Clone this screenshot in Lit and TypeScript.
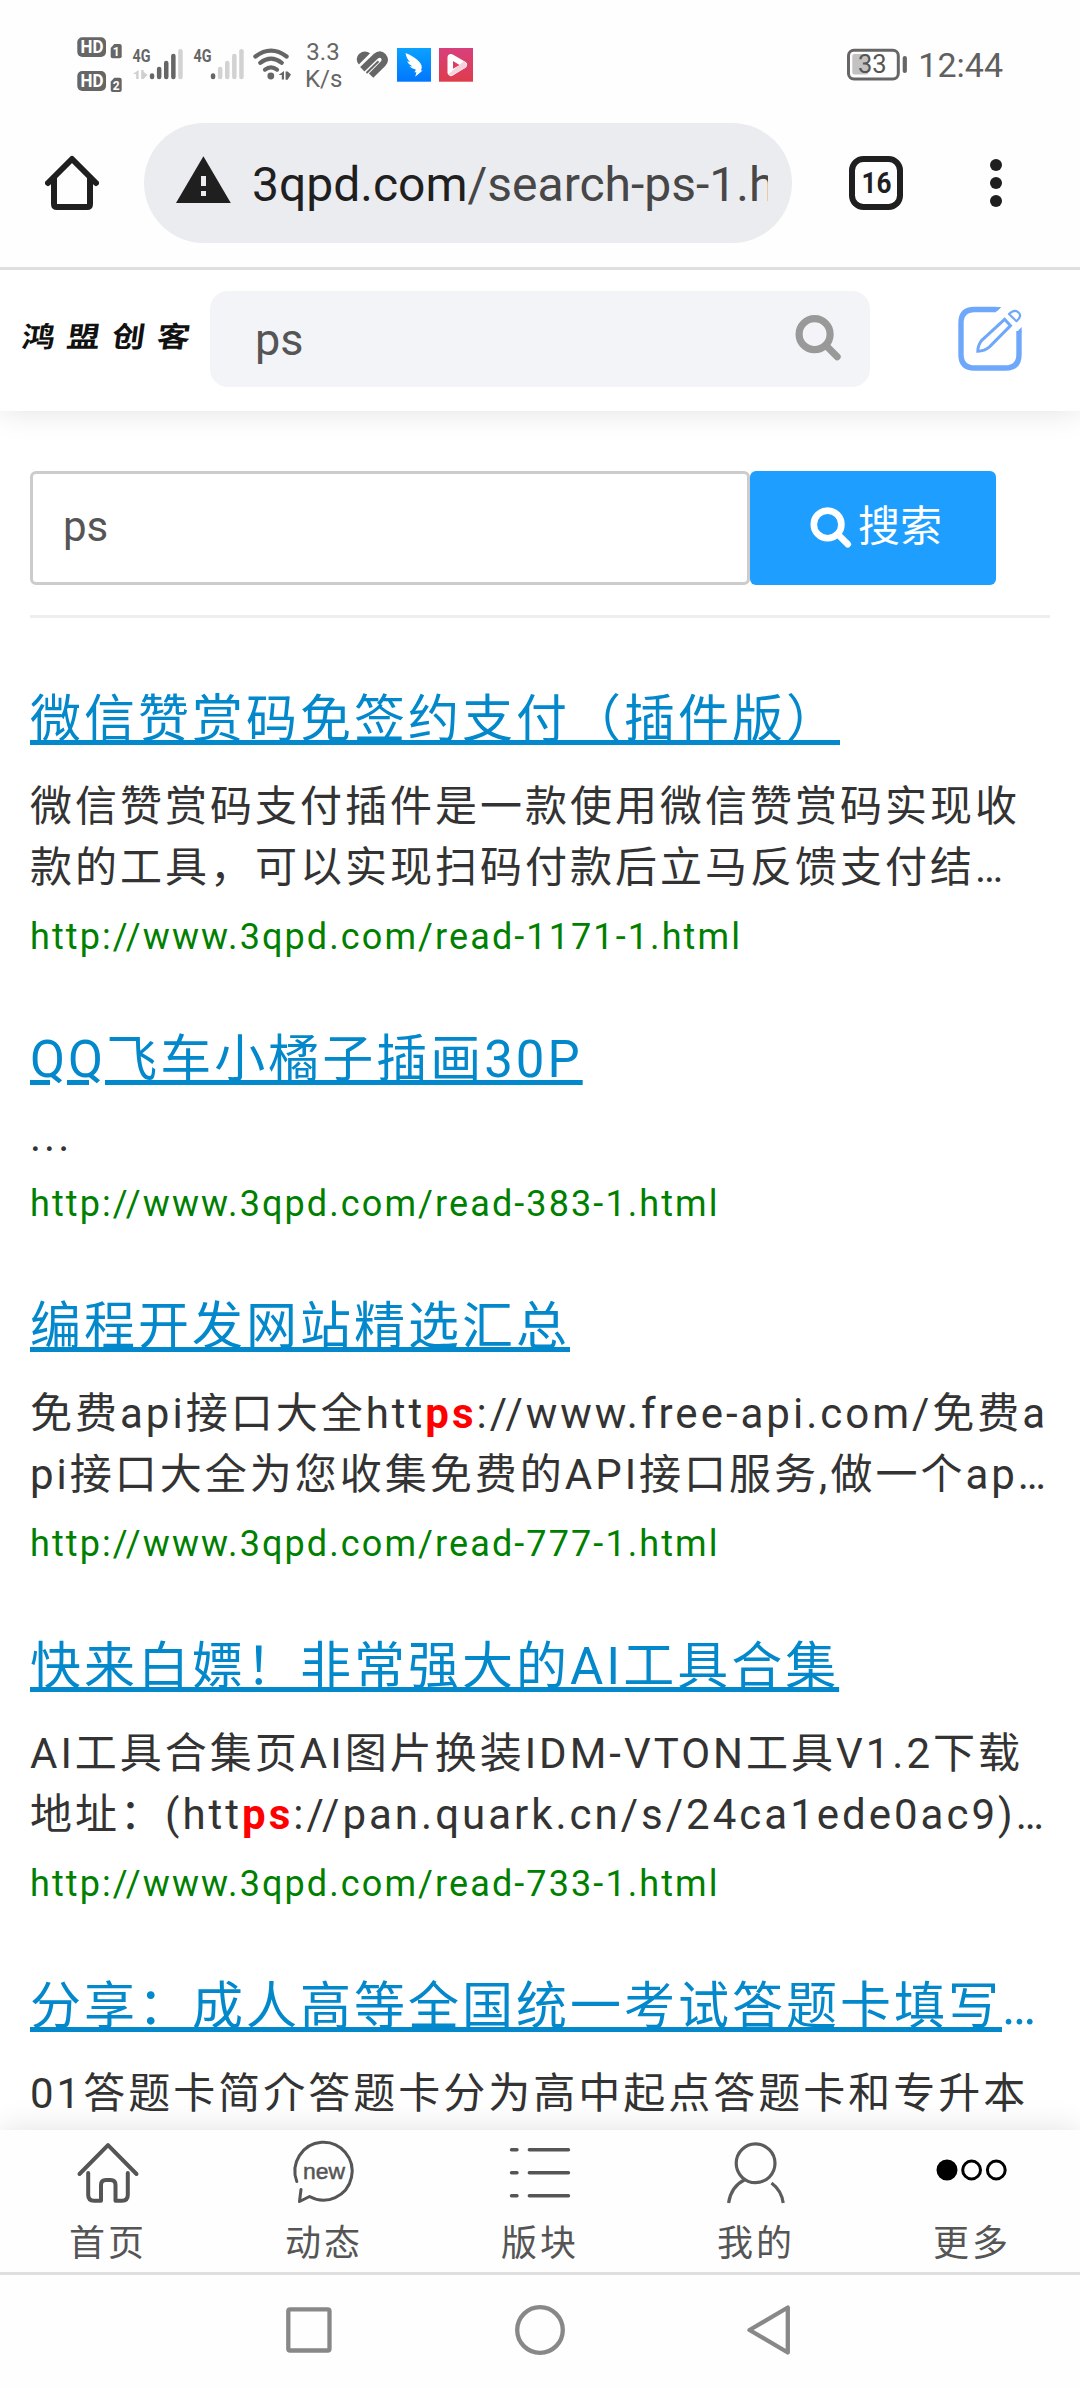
import { LitElement, html, svg, css, TemplateResult } from "lit";
import { customElement, property } from "lit/decorators.js";

const base = css`
  :host {
    display: block;
    box-sizing: border-box;
    font-family: Roboto, "Noto Sans CJK SC", sans-serif;
  }
  * {
    box-sizing: border-box;
  }
  svg {
    display: block;
    flex: none;
  }
`;

/* ---------- Status bar ---------- */

@customElement("status-bar")
class StatusBar extends LitElement {
  static styles = [
    base,
    css`
      .bar {
        display: flex;
        height: 123px;
        padding: 30px 77px 0 77px;
        align-items: flex-start;
        background: #fefefe;
        color: #666;
      }
      .signal {
        margin-left: 10px;
      }
      .wifi {
        margin-left: 9px;
      }
      .speed {
        margin-left: 13px;
        width: 36px;
        padding-top: 9px;
        text-align: center;
        font-size: 24px;
        line-height: 27px;
        white-space: nowrap;
      }
      .health {
        margin-left: 15px;
      }
      .app {
        margin-left: 8px;
      }
      .spacer {
        flex: 1;
      }
      .clock {
        margin-left: 10px;
        padding-top: 15px;
        font-size: 34px;
        line-height: 40px;
        color: #606060;
      }
    `,
  ];

  private signalIcon(active: number, arrows: boolean) {
    const tops = [73.3, 66.7, 60.7, 53.7, 49];
    return html`<svg class="signal" width="51" height="70" viewBox="132 30 51 70">
      <text x="132.6" y="62" font-size="18" font-weight="700" fill="#666" textLength="18" lengthAdjust="spacingAndGlyphs">4G</text>
      ${arrows
        ? svg`<path d="M138.6 70v9h-2.4v-5H133z M141.2 79v-9h2.4v2l4 2.8-4 4.2z" fill="#cfcfcf"/>`
        : ""}
      ${tops.map(
        (y, i) =>
          svg`<rect x=${149.8 + i * 7.1} y=${y} width="4.5" height=${79.3 - y} rx="2.2" fill=${i < active ? "#666" : "#d2d2d2"}/>`
      )}
    </svg>`;
  }

  render() {
    return html`<div class="bar">
      <svg width="45" height="70" viewBox="77 30 45 70">
        <rect x="77.3" y="37.3" width="28.7" height="19.7" rx="5" fill="#666" />
        <text x="80.5" y="53.4" font-size="18" font-weight="700" fill="#fff" textLength="23" lengthAdjust="spacingAndGlyphs">HD</text>
        <path d="M110.7 48l3.6-4h5.4q2 0 2 2v10.3q0 2-2 2h-7q-2 0-2-2z" fill="#666" />
        <text x="112.800" y="56" font-size="12" font-weight="700" fill="#fff">1</text>
        <rect x="77.3" y="71" width="28.7" height="20" rx="5" fill="#666" />
        <text x="80.5" y="87.3" font-size="18" font-weight="700" fill="#fff" textLength="23" lengthAdjust="spacingAndGlyphs">HD</text>
        <path d="M110.7 81.7l3.6-4h5.4q2 0 2 2V90q0 2-2 2h-7q-2 0-2-2z" fill="#666" />
        <text x="112.800" y="89.8" font-size="12" font-weight="700" fill="#fff">2</text>
      </svg>
      ${this.signalIcon(4, true)} ${this.signalIcon(1, false)}
      <svg class="wifi" width="39" height="70" viewBox="253 30 39 70">
        <g fill="none" stroke="#666" stroke-width="4.2" stroke-linecap="round">
          <path d="M255.4 56.5Q271 44.6 286.6 56.5" />
          <path d="M260.2 62.8Q271 54.6 281.8 62.8" />
          <path d="M265 69.6Q271 65 277 69.6" />
        </g>
        <circle cx="270.8" cy="76" r="3.4" fill="#666" />
        <path d="M284 71v8.4h-2.2V75H278.6z M285.6 79.8v-8.4h2l3.4 3.2-3.4 5.2z" fill="#666" />
      </svg>
      <div class="speed">3.3<br />K/s</div>
      <svg class="health" width="33" height="70" viewBox="357.5 30 33 70">
        <path d="M360.300 64.600Q356 58.500 360.500 54 366 49.600 371.600 53.300z" fill="#666" />
        <path d="M363.800 69.200L377 56.500Q381.500 52.800 384.800 56.200 388 60 384.500 63.800L372.600 75.600" fill="none" stroke="#666" stroke-width="6.200" />
        <path d="M368 73L380 61.200" fill="none" stroke="#666" stroke-width="2" />
      </svg>
      <svg class="app" width="34" height="70" viewBox="399 30 34 70">
        <defs>
          <linearGradient id="wing" x1="0" y1="0" x2="0" y2="1">
            <stop offset="0" stop-color="#0aa2ff" />
            <stop offset="1" stop-color="#0076ff" />
          </linearGradient>
        </defs>
        <rect x="399" y="48" width="34" height="33.7" fill="url(#wing)" />
        <path d="M407.6 53q8.6 3.6 13.4 8.4 3.4 3.2 2.6 7.2l-.8 1.9h1.8l-7.4 6.2 1.2-4.4h-2l1.6-2.6q-4.200 -.8-6.600-3.500l3 .3q-4-2-5.400-5.200l3 .6q-3.600-3-4.400-8.900z" fill="#fff" />
      </svg>
      <svg class="app" width="34" height="70" viewBox="441 30 34 70">
        <defs>
          <linearGradient id="play" x1="0" y1="0" x2="0" y2="1">
            <stop offset="0" stop-color="#d8407c" />
            <stop offset="1" stop-color="#de3c4c" />
          </linearGradient>
        </defs>
        <rect x="441" y="48" width="34" height="33.7" fill="url(#play)" />
        <path d="M453 57.500L465.500 64.700 453 72.500z" fill="#fff" stroke="#fff" stroke-width="7" stroke-linejoin="round" />
        <path d="M466 61l3 4-1 2.500-14.500 8.300-3.500-1.300z" fill="#f6d3dc" />
        <path d="M455 61L461.500 64.900 455 68.800z" fill="#dc3e62" />
      </svg>
      <div class="spacer"></div>
      <svg width="61" height="70" viewBox="849 30 61 70">
        <rect x="854.3" y="54" width="16" height="20.500" rx="2" fill="#c2c2c2" />
        <rect x="850.5" y="50.200" width="49.800" height="28.800" rx="5.500" fill="none" stroke="#666" stroke-width="3" />
        <rect x="904.700" y="56" width="4.200" height="17" rx="2.100" fill="#666" />
        <text x="860" y="73" font-size="25.500" fill="#555">33</text>
      </svg>
      <div class="clock">12:44</div>
    </div>`;
  }
}

/* ---------- Browser toolbar ---------- */

@customElement("browser-bar")
class BrowserBar extends LitElement {
  static styles = [
    base,
    css`
      :host {
        position: relative;
        z-index: 2;
      }
      .bar {
        display: flex;
        height: 147px;
        padding: 0 78px 0 45px;
        align-items: flex-start;
        background: #fefefe;
        border-bottom: 3px solid #dfdfdf;
      }
      .address {
        display: flex;
        align-items: center;
        width: 648px;
        height: 120px;
        margin-left: 45px;
        padding: 0 24px 0 32px;
        border-radius: 60px;
        background: #ebecf0;
      }
      .url {
        flex: 1;
        margin-left: 21px;
        padding-top: 3px;
        overflow: hidden;
        white-space: nowrap;
        font-size: 48px;
        line-height: 60px;
        color: #474747;
      }
      .host {
        color: #1f1f1f;
      }
      .tabs {
        margin-left: 57px;
      }
      .menu {
        margin-left: 87px;
      }
    `,
  ];

  render() {
    return html`<div class="bar">
      <svg width="54" height="120" viewBox="45 123 54 120">
        <g fill="none" stroke="#1f1f1f" stroke-width="6" stroke-linecap="round" stroke-linejoin="round">
          <path d="M48 183L72 159 96 183" />
          <path d="M54 178V204Q54 207 57 207H87Q90 207 90 204V178" />
        </g>
      </svg>
      <div class="address">
        <svg width="55" height="120" viewBox="176 123 55 120">
          <path d="M203.400 156.300L230.800 203H176z" fill="#1f1f1f" />
          <path d="M201 176h5v10h-5zM201 191h5v5h-5z" fill="#ebecf0" />
        </svg>
        <div class="url"><span class="host">3qpd.com</span>/search-ps-1.h</div>
      </div>
      <svg class="tabs" width="54" height="120" viewBox="849 123 54 120">
        <rect x="852" y="159" width="48" height="48" rx="11.500" fill="none" stroke="#1f1f1f" stroke-width="6" />
        <text x="861.500" y="193" font-size="29" font-weight="700" fill="#1f1f1f" textLength="30" lengthAdjust="spacingAndGlyphs">16</text>
      </svg>
      <svg class="menu" width="12" height="120" viewBox="990 123 12 120" fill="#1f1f1f">
        <circle cx="996" cy="165" r="6" />
        <circle cx="996" cy="183" r="6" />
        <circle cx="996" cy="201" r="6" />
      </svg>
    </div>`;
  }
}

/* ---------- Site header ---------- */

@customElement("site-header")
class SiteHeader extends LitElement {
  static styles = [
    base,
    css`
      :host {
        position: relative;
        z-index: 1;
      }
      .bar {
        display: flex;
        align-items: center;
        height: 141px;
        padding: 0 58px 3px 22px;
        background: #fff;
        box-shadow: 0 0 30px rgba(0, 0, 0, 0.12);
      }
      .logo {
        width: 188px;
        padding-bottom: 2px;
        font-size: 33px;
        font-weight: 700;
        line-height: 44px;
        letter-spacing: 12px;
        white-space: nowrap;
        color: #111;
      }
      .glyphs {
        display: inline-block;
        transform: skewX(-8deg) scaleY(0.86);
      }
      .field {
        display: flex;
        align-items: center;
        width: 660px;
        height: 96px;
        padding: 0 29px 0 45px;
        border-radius: 18px;
        background: #f3f4f8;
      }
      .query {
        flex: 1;
        padding-top: 2px;
        font-size: 45px;
        line-height: 54px;
        color: #555;
      }
      .edit {
        margin-left: 88px;
      }
    `,
  ];

  render() {
    return html`<div class="bar">
      <div class="logo"><span class="glyphs">鸿盟创客</span></div>
      <div class="field">
        <div class="query">ps</div>
        <svg width="46" height="96" viewBox="795 291 46 96" fill="none" stroke="#999">
          <circle cx="814.600" cy="334.200" r="15.500" stroke-width="7.200" />
          <path d="M826 345.500L837.200 356.700" stroke-width="7" stroke-linecap="round" />
        </svg>
      </div>
      <svg class="edit" width="64" height="96" viewBox="958 291 64 96" fill="none" stroke="#6fa8fa">
        <path d="M996 309.500H974.500Q961 309.500 961 323V354.500Q961 368 974.500 368H1005.500Q1019 368 1019 354.500V331" stroke-width="5.400" />
        <path d="M1001.200 307h-10v5h4.500q2.500-1.200 5.500-5z M1021.700 327l-5.400 5.500h5.400z" fill="#6fa8fa" stroke="none" />
        <path d="M1004.600 319.300L1010.500 325.600 989.500 346.800Q984.500 351 977.800 351.200 977.800 345.500 981.500 340.600z" stroke-width="3" />
        <path d="M1009 314Q1014.500 308.500 1018.500 312.500 1022.500 316 1016.500 321.200z" stroke-width="2.200" stroke-linejoin="round" />
      </svg>
    </div>`;
  }
}

/* ---------- Search form ---------- */

@customElement("search-form")
class SearchForm extends LitElement {
  static styles = [
    base,
    css`
      .form {
        display: flex;
        margin: 60px 30px 0;
        padding-bottom: 30px;
        border-bottom: 3px solid #eee;
      }
      .input {
        width: 720px;
        height: 114px;
        padding-left: 30px;
        border: 3px solid #ccc;
        border-radius: 6px;
        font-size: 42px;
        line-height: 106px;
        color: #555;
      }
      .button {
        display: flex;
        align-items: center;
        width: 246px;
        height: 114px;
        padding-left: 60px;
        border-radius: 6px;
        background: #1e9fff;
        color: #fff;
        font-size: 42px;
        line-height: 60px;
      }
      .label {
        margin-left: 6px;
        padding-bottom: 3px;
      }
    `,
  ];

  render() {
    return html`<div class="form">
      <div class="input">ps</div>
      <div class="button">
        <svg width="42" height="114" viewBox="810 471 42 114" fill="none" stroke="#fff">
          <circle cx="827.600" cy="524.400" r="13.800" stroke-width="6.600" />
          <path d="M838 534.500L847.700 544.200" stroke-width="6.600" stroke-linecap="round" />
        </svg>
        <span class="label">搜索</span>
      </div>
    </div>`;
  }
}

/* ---------- Search result ---------- */

interface Result {
  title: string;
  cut?: boolean;
  lines: TemplateResult[];
  url?: string;
}

@customElement("search-result")
class SearchResult extends LitElement {
  @property({ attribute: false }) item!: Result;

  static styles = [
    base,
    css`
      .item {
        padding: 60px 30px 0;
        letter-spacing: 3px;
        white-space: nowrap;
      }
      .title {
        height: 75px;
        padding-top: 5px;
        font-size: 51px;
        line-height: 74px;
        color: #0388cc;
      }
      .link {
        text-decoration: underline;
        text-decoration-thickness: 5px;
        text-underline-offset: 3px;
      }
      .more {
        letter-spacing: 0;
      }
      .text {
        margin-top: 19px;
        font-size: 42px;
        color: #333;
      }
      .url {
        margin-top: 22px;
        height: 42px;
        font-size: 36px;
        line-height: 42px;
        letter-spacing: 2.1px;
        color: #008000;
      }
      .text b {
        color: #f00;
      }
    `,
  ];

  render() {
    const r = this.item;
    return html`<div class="item">
      <div class="title"><span class="link">${r.title}</span>${r.cut ? html`<span class="more">…</span>` : ""}</div>
      <div class="text">${r.lines.map((l) => html`<div class="line">${l}</div>`)}</div>
      ${r.url ? html`<div class="url">${r.url}</div>` : ""}
    </div>`;
  }
}

/* ---------- Tab bar ---------- */

@customElement("tab-bar")
class TabBar extends LitElement {
  static styles = [
    base,
    css`
      :host {
        position: relative;
        z-index: 1;
      }
      .bar {
        display: grid;
        grid-template-columns: repeat(5, 216px);
        height: 145px;
        background: #fefefe;
        border-bottom: 3px solid #dfdfdf;
        box-shadow: 0 0 30px rgba(0, 0, 0, 0.12);
      }
      .tab {
        display: flex;
        flex-direction: column;
        align-items: center;
        padding-top: 8px;
      }
      .label {
        margin-top: 10px;
        font-size: 36px;
        line-height: 52px;
        letter-spacing: 3px;
        color: #555;
      }
    `,
  ];

  private tabs: { label: string; icon: TemplateResult }[] = [
    {
      label: "首页",
      icon: svg`<g stroke="#555" stroke-width="4" stroke-linecap="round" stroke-linejoin="round">
        <path d="M3.500 36L32 7.200 60.500 36"/>
        <path d="M12.200 35V57Q12.200 62.700 18 62.700H25V47Q25 42 30 42H34.500Q39.500 42 39.500 47V62.700H46Q51.800 62.700 51.800 57V35"/></g>`,
    },
    {
      label: "动态",
      icon: svg`<g stroke="#555" stroke-width="3" stroke-linecap="round" stroke-linejoin="round">
        <path d="M4.800 43.500A28.600 29 0 1 1 17.600 58.500L7.500 63.500 9 51.500"/></g>
        <text x="32" y="41" text-anchor="middle" font-family="Liberation Sans" font-size="22" fill="#555" stroke="#555" stroke-width=".5" textLength="42" lengthAdjust="spacingAndGlyphs">new</text>`,
    },
    {
      label: "版块",
      icon: svg`<g stroke="#555" stroke-width="3.400" stroke-linecap="round">
        <path d="M3.500 11.700H9M21.300 11.700H60.500M3.500 34.700H9M21.300 34.700H60.500M3.500 57.700H9M21.300 57.700H60.500"/></g>`,
    },
    {
      label: "我的",
      icon: svg`<g stroke="#5c5c5c" stroke-width="3.200">
        <circle cx="31.600" cy="25.300" r="19.400"/>
        <path d="M4.600 65Q7 48.500 21 41.500"/>
        <path d="M47.500 45Q57.500 52.500 59.200 65"/></g>`,
    },
    {
      label: "更多",
      icon: svg`<g stroke="#000" stroke-width="3">
        <circle cx="7" cy="32" r="9" fill="#000"/>
        <circle cx="31.600" cy="32" r="8.900"/>
        <circle cx="56.300" cy="32" r="8.900"/></g>`,
    },
  ];

  render() {
    return html`<div class="bar">
      ${this.tabs.map(
        (t) => html`<div class="tab">
          <svg width="72" height="70" viewBox="-4 0 72 70" fill="none">${t.icon}</svg>
          <span class="label">${t.label}</span>
        </div>`
      )}
    </div>`;
  }
}

/* ---------- System navigation ---------- */

@customElement("system-nav")
class SystemNav extends LitElement {
  static styles = [
    base,
    css`
      :host {
        position: relative;
        z-index: 2;
      }
      .bar {
        display: flex;
        justify-content: center;
        gap: 180px;
        height: 113px;
        padding-top: 25px;
        background: #fefefe;
      }
    `,
  ];

  render() {
    return html`<div class="bar">
      <svg width="50" height="60" viewBox="284 2300 50 60" fill="none" stroke="#888" stroke-width="4.300">
        <rect x="288.300" y="2309.300" width="41.200" height="41.200" rx="1.800" />
      </svg>
      <svg width="52" height="60" viewBox="514 2300 52 60" fill="none" stroke="#888" stroke-width="4.300">
        <circle cx="540" cy="2330" r="22.800" />
      </svg>
      <svg width="50" height="60" viewBox="746 2300 50 60" fill="none" stroke="#888" stroke-width="4.300" stroke-linejoin="round">
        <path d="M749.500 2330L787.800 2307.500V2352.500z" />
      </svg>
    </div>`;
  }
}

/* ---------- Page ---------- */

const dots = html`<span style="letter-spacing:0">…</span>`;

@customElement("app-root")
class AppRoot extends LitElement {
  static styles = [
    base,
    css`
      :host {
        display: flex;
        flex-direction: column;
        width: 1080px;
        height: 2388px;
        overflow: hidden;
        background: #fff;
      }
      .results {
        flex: 1;
        min-height: 0;
        overflow: hidden;
      }
    `,
  ];

  private results: Result[] = [
    {
      title: "微信赞赏码免签约支付（插件版）",
      lines: [html`微信赞赏码支付插件是一款使用微信赞赏码实现收`, html`款的工具，可以实现扫码付款后立马反馈支付结${dots}`],
      url: "http://www.3qpd.com/read-1171-1.html",
    },
    {
      title: "QQ飞车小橘子插画30P",
      lines: [html`...`],
      url: "http://www.3qpd.com/read-383-1.html",
    },
    {
      title: "编程开发网站精选汇总",
      lines: [
        html`免费api接口大全htt<b>ps</b>://www.free-api.com/免费a`,
        html`pi接口大全为您收集免费的API接口服务,做一个ap${dots}`,
      ],
      url: "http://www.3qpd.com/read-777-1.html",
    },
    {
      title: "快来白嫖！非常强大的AI工具合集",
      lines: [
        html`AI工具合集页AI图片换装IDM-VTON工具V1.2下载`,
        html`地址：(htt<b>ps</b>://pan.quark.cn/s/24ca1ede0ac9)${dots}`,
      ],
      url: "http://www.3qpd.com/read-733-1.html",
    },
    {
      title: "分享：成人高等全国统一考试答题卡填写",
      cut: true,
      lines: [html`01答题卡简介答题卡分为高中起点答题卡和专升本`],
    },
  ];

  render() {
    return html`
      <status-bar></status-bar>
      <browser-bar></browser-bar>
      <site-header></site-header>
      <div class="results">
        <search-form></search-form>
        ${this.results.map((r) => html`<search-result .item=${r}></search-result>`)}
      </div>
      <tab-bar></tab-bar>
      <system-nav></system-nav>
    `;
  }
}
